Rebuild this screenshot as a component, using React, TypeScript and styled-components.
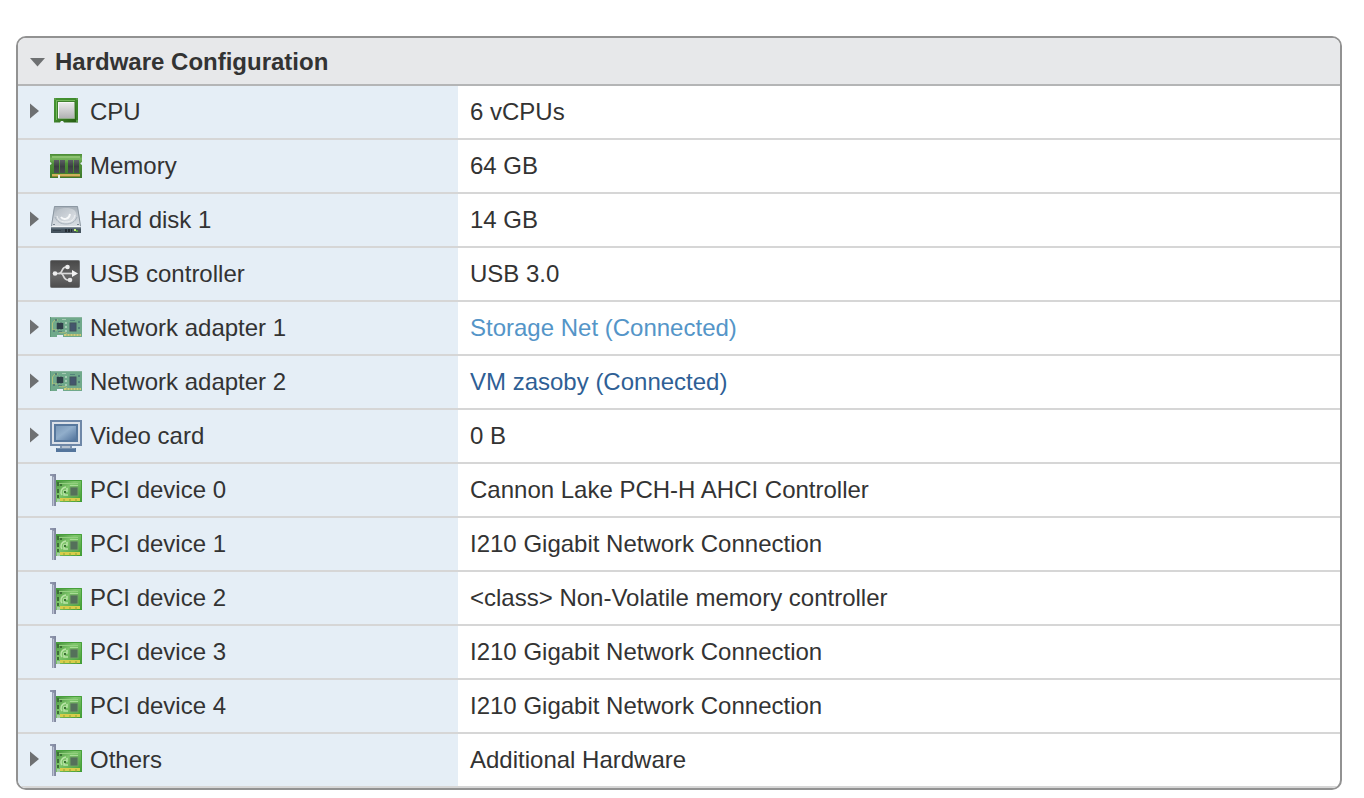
import React, { useState } from "react";
import styled, { createGlobalStyle } from "styled-components";

const GlobalStyle = createGlobalStyle`
  *, *::before, *::after { box-sizing: border-box; }
  body {
    margin: 0;
    background: #ffffff;
    color: #333333;
    font-family: "Helvetica Neue", "Liberation Sans", Arial, sans-serif;
    font-size: 24px;
    line-height: 28px;
  }
`;

const Page = styled.main`
  padding: 36px 22px 8px 16px;
`;

const Panel = styled.section`
  border: 2px solid #929292;
  border-radius: 10px;
  overflow: hidden;
  background: #ffffff;
`;

const PanelHeader = styled.h2`
  margin: 0;
  font-size: 24px;
  font-weight: 700;
  background: #e7e8ea;
  border-bottom: 2px solid #b4b5b6;
`;

const HeaderToggle = styled.button`
  display: flex;
  align-items: center;
  gap: 10px;
  width: 100%;
  height: 46px;
  padding: 2px 12px 0;
  border: 0;
  background: none;
  color: inherit;
  font: inherit;
  line-height: 28px;
  text-align: left;
  cursor: pointer;
`;

const HardwareTable = styled.table`
  width: 100%;
  table-layout: fixed;
  border-collapse: separate;
  border-spacing: 0;
`;

const NameCell = styled.th`
  width: 440px;
  height: 54px;
  padding: 0;
  border-bottom: 2px solid #d6d6d6;
  background: #e5eef6;
  font-weight: 400;
  text-align: left;
`;

const NameContent = styled.div`
  display: flex;
  align-items: center;
`;

const RowToggle = styled.button`
  display: flex;
  align-items: center;
  justify-content: flex-end;
  width: 22px;
  height: 32px;
  margin-right: 10px;
  padding: 0 1px 2px 0;
  border: 0;
  background: none;
  cursor: pointer;
`;

const ToggleSpace = styled.span`
  width: 32px;
`;

const DeviceIcon = styled.svg`
  width: 32px;
  height: 32px;
  margin-right: 8px;
  flex: none;
`;

const ValueCell = styled.td`
  height: 54px;
  padding: 0 12px;
  border-bottom: 2px solid #d6d6d6;
`;

const NetworkLink = styled.a<{ $tone: string }>`
  color: ${(p) => p.$tone};
  text-decoration: none;
`;

function CpuIcon() {
  return (
    <DeviceIcon viewBox="0 0 32 32" aria-hidden="true">
      <defs>
        <linearGradient id="cpuBoard" x1="0" y1="0" x2="1" y2="1">
          <stop offset="0" stopColor="#5cab45" />
          <stop offset="1" stopColor="#22590f" />
        </linearGradient>
        <linearGradient id="cpuCap" x1="0" y1="0" x2="0" y2="1">
          <stop offset="0" stopColor="#ededee" />
          <stop offset="1" stopColor="#b2b2b4" />
        </linearGradient>
      </defs>
      <path d="M4 2H28V26.500H14L13 25H11L10 26.500H4Z" fill="url(#cpuBoard)" />
      <path d="M5 25V3H27V25" fill="none" stroke="#3f8c2c" strokeWidth="1.500" />
      <path d="M6.500 24V4.500H25" fill="none" stroke="#73b85c" strokeWidth="1" />
      <path d="M4 2h2v2H4zM26 2h2v2h-2zM26 24h2v2h-2z" fill="#5a9a48" />
      <rect x="7" y="5" width="18" height="18" fill="#3f7f2e" />
      <rect x="8" y="6" width="16" height="16" fill="url(#cpuCap)" />
      <path d="M8.500 22V6.500H24" fill="none" stroke="#f7f7f8" strokeWidth="1" />
      <path d="M8 22.500H24.500V6" fill="none" stroke="#8fae86" strokeWidth="1" />
    </DeviceIcon>
  );
}

function MemoryIcon() {
  return (
    <DeviceIcon viewBox="0 0 32 32" aria-hidden="true">
      <defs>
        <linearGradient id="ramBoard" x1="0" y1="0" x2="0" y2="1">
          <stop offset="0" stopColor="#4a8a34" />
          <stop offset="0.2" stopColor="#78b55e" />
          <stop offset="0.4" stopColor="#4f9039" />
          <stop offset="1" stopColor="#3d792a" />
        </linearGradient>
        <linearGradient id="ramChip" x1="0" y1="0" x2="0" y2="1">
          <stop offset="0" stopColor="#5c6063" />
          <stop offset="0.5" stopColor="#3b3f42" />
          <stop offset="1" stopColor="#4b4f50" />
        </linearGradient>
      </defs>
      <path d="M0 4H32V12L30.500 13V14L32 15V28H10V26H8V28H0V15L1.500 14V13L0 12Z" fill="url(#ramBoard)" />
      <path d="M2 7H30" stroke="#8bc16f" strokeWidth="2" />
      <g fill="url(#ramChip)">
        <rect x="4" y="10" width="5" height="13" />
        <rect x="10" y="10" width="5" height="13" />
        <rect x="18" y="10" width="5" height="13" />
        <rect x="24" y="10" width="5" height="13" />
      </g>
      <path d="M2 24H30V26H2Z" fill="#d0b15a" />
      <path d="M2 26H8V27H2ZM10 26H30V27H10Z" fill="#8f8433" />
      <path d="M8 25h2v3H8z" fill="#e5eee6" />
    </DeviceIcon>
  );
}

function DiskIcon() {
  return (
    <DeviceIcon viewBox="0 0 32 32" aria-hidden="true">
      <defs>
        <linearGradient id="diskCase" x1="0" y1="0" x2="0" y2="1">
          <stop offset="0" stopColor="#a3acb5" />
          <stop offset="0.5" stopColor="#c5ccd3" />
          <stop offset="1" stopColor="#dde2e7" />
        </linearGradient>
        <linearGradient id="diskPlate" x1="0" y1="0" x2="1" y2="1">
          <stop offset="0" stopColor="#b4bcc4" />
          <stop offset="1" stopColor="#e1e5e9" />
        </linearGradient>
      </defs>
      <path d="M4.500 2H27.500L31 21V24H1V21Z" fill="url(#diskCase)" />
      <path d="M1.500 22L4.500 2.500H27.500L30.500 22" fill="none" stroke="#8c98a3" strokeWidth="1" />
      <path d="M6 12C5 6 10 4 16 4C22 4 27 6 26 12C25 17 21 19 16 19C11 19 7 17 6 12Z" fill="url(#diskPlate)" />
      <path d="M5 13C7 18 11 20 16 20C21 20 25 18 27 13" fill="none" stroke="#a7b1bb" strokeWidth="1" />
      <path d="M7 12C8 17 12 18 16 18C21 18 24 16 25 11" fill="none" stroke="#eef1f4" strokeWidth="1" />
      <path d="M11 13C13 16 19 16 20 10" fill="none" stroke="#f7f9fa" strokeWidth="2" />
      <path d="M3 20.500h2M27 20.500h2" stroke="#7b8792" strokeWidth="1" />
      <path d="M2 22.500H30" stroke="#f0f3f5" strokeWidth="1" />
      <path d="M1 23.500H31V29H1Z" fill="#46545f" />
      <path d="M1 24H31" stroke="#6e7e8b" strokeWidth="1" />
      <path d="M15 25h2v3h-2zM18 25h2v3h-2zM21 25h1v3h-1z" fill="#242d34" />
      <rect x="24" y="25" width="2" height="2" fill="#c9f57a" />
      <path d="M26 26h2v2h-2z" fill="#599c36" />
      <path d="M3 26h8v1H3z" fill="#34414b" />
    </DeviceIcon>
  );
}

function UsbIcon() {
  return (
    <DeviceIcon viewBox="0 0 32 32" aria-hidden="true">
      <defs>
        <linearGradient id="usbTile" x1="0" y1="0" x2="0" y2="1">
          <stop offset="0" stopColor="#484848" />
          <stop offset="0.6" stopColor="#666666" />
          <stop offset="1" stopColor="#4d4d4d" />
        </linearGradient>
      </defs>
      <rect x="0.500" y="2.500" width="29" height="27" rx="1" fill="url(#usbTile)" stroke="#707274" />
      <g fill="none" stroke="#dadada" strokeWidth="1.700">
        <path d="M5 15.500H25" />
        <path d="M9 15.500C13 15.500 11 9 16 9" />
        <path d="M11 15.500C14 15.500 13 22 18 22" />
      </g>
      <circle cx="5" cy="15.500" r="2.300" fill="#eeeeee" />
      <circle cx="17.500" cy="9" r="2.300" fill="#ededed" />
      <circle cx="20" cy="22" r="2.300" fill="#e8e8e8" />
      <path d="M22 12L28 15.500L22 19Z" fill="#f3f3f3" />
    </DeviceIcon>
  );
}

function NetworkIcon() {
  return (
    <DeviceIcon viewBox="0 0 32 32" aria-hidden="true">
      <path d="M0 5H32V25H13V23H7V25H0Z" fill="#70a98b" />
      <path d="M0 5.500H32" stroke="#8bb6a0" strokeWidth="1" />
      <path d="M.5 5V25" stroke="#5b9779" strokeWidth="1" />
      <path d="M8 8H5L2.500 11V18H7M9 20C13 22 15 19 17 22" fill="none" stroke="#b0c17a" strokeWidth="1" />
      <path d="M5 7h2v2H5zM3 18h2v2H3zM8 19h4v1H8z" fill="#577e77" />
      <path d="M15 10h2v2h-2zM15 14h2v2h-2zM15 18h2v2h-2zM12 7h4v1h-4z" fill="#a5cab3" />
      <rect x="7" y="11" width="6" height="6" fill="#2f3f49" />
      <path d="M6 12h1M6 14h1M6 16h1M13 12h1M13 14h1M13 16h1M8 10v1M11 10v1M8 17v1M11 17v1" stroke="#546c6b" strokeWidth="1" />
      <rect x="20" y="11" width="6" height="8" fill="#44566d" stroke="#42555f" strokeWidth="1" />
      <path d="M20 8h5v1h-5zM28 9h2v2h-2zM28 15h2v2h-2z" fill="#53837b" />
      <path d="M14 22H31V24H14Z" fill="#cdcb79" />
      <path d="M17 22v2M20 22v2M23 22v2M26 22v2M29 22v2" stroke="#8faa72" strokeWidth="1" />
    </DeviceIcon>
  );
}

function VideoIcon() {
  return (
    <DeviceIcon viewBox="0 0 32 32" aria-hidden="true">
      <defs>
        <linearGradient id="videoScreen" x1="0" y1="0" x2="1" y2="1">
          <stop offset="0" stopColor="#7896b6" />
          <stop offset="0.450" stopColor="#91aecb" />
          <stop offset="1" stopColor="#4b6d97" />
        </linearGradient>
      </defs>
      <rect x="1" y="1" width="30" height="24" fill="#dce1e8" stroke="#6e87a7" strokeWidth="2" />
      <rect x="5" y="5" width="22" height="16" fill="url(#videoScreen)" stroke="#58789d" strokeWidth="2" />
      <path d="M10 26H22V28H10Z" fill="#8297b1" />
      <path d="M12 26H20V28H12Z" fill="#b6c2d0" />
      <rect x="6" y="28" width="20" height="4" fill="#54759c" />
      <path d="M7 28.500H25" stroke="#7891ae" strokeWidth="1" />
    </DeviceIcon>
  );
}

function PciIcon() {
  return (
    <DeviceIcon viewBox="0 0 32 32" aria-hidden="true">
      <defs>
        <linearGradient id="pciBoard" x1="0" y1="0" x2="1" y2="1">
          <stop offset="0" stopColor="#3f8b36" />
          <stop offset="0.400" stopColor="#80c76d" />
          <stop offset="1" stopColor="#3d9a30" />
        </linearGradient>
        <linearGradient id="pciBracket">
          <stop offset="0" stopColor="#a9b0c3" />
          <stop offset="1" stopColor="#7d849c" />
        </linearGradient>
      </defs>
      <path d="M6 6H32V28H6Z" fill="url(#pciBoard)" />
      <path d="M6 6.500H31.500V27" fill="none" stroke="#47a03b" strokeWidth="1" />
      <path d="M9 9.500H28" stroke="#94cf80" strokeWidth="1" />
      <path d="M20 11.500H28" stroke="#a8dc95" strokeWidth="1" />
      <path d="M16 13C11 14 10 18 12 21M17 14V17H14V21H18" fill="none" stroke="#b9e3a6" strokeWidth="1.500" />
      <path d="M7 8h2v4H7zM7 15h2v4H7zM10 10h2v2h-2zM7 21h2v3H7zM14 17h2v2h-2z" fill="#3d7036" />
      <rect x="20" y="13" width="8" height="9" fill="#54705a" stroke="#70a565" strokeWidth="1" />
      <path d="M10 24H30V27H10Z" fill="#d8cd4a" />
      <path d="M14 25v3M20 25v3M26 25v3" stroke="#8da234" strokeWidth="1" />
      <path d="M7 25h3v3H7z" fill="#a7cfa3" />
      <path d="M0 0H6V32H2V2H0Z" fill="url(#pciBracket)" />
      <path d="M3.500 3V32" stroke="#bbc1d2" strokeWidth="1" />
      <path d="M0 1H6" stroke="#8087a0" strokeWidth="1" />
    </DeviceIcon>
  );
}

type Device = {
  name: string;
  value: string;
  icon: () => React.JSX.Element;
  expandable?: boolean;
  linkColor?: string;
};

const devices: Device[] = [
  { name: "CPU", value: "6 vCPUs", icon: CpuIcon, expandable: true },
  { name: "Memory", value: "64 GB", icon: MemoryIcon },
  { name: "Hard disk 1", value: "14 GB", icon: DiskIcon, expandable: true },
  { name: "USB controller", value: "USB 3.0", icon: UsbIcon },
  { name: "Network adapter 1", value: "Storage Net (Connected)", icon: NetworkIcon, expandable: true, linkColor: "#5495c8" },
  { name: "Network adapter 2", value: "VM zasoby (Connected)", icon: NetworkIcon, expandable: true, linkColor: "#2f5f95" },
  { name: "Video card", value: "0 B", icon: VideoIcon, expandable: true },
  { name: "PCI device 0", value: "Cannon Lake PCH-H AHCI Controller", icon: PciIcon },
  { name: "PCI device 1", value: "I210 Gigabit Network Connection", icon: PciIcon },
  { name: "PCI device 2", value: "<class> Non-Volatile memory controller", icon: PciIcon },
  { name: "PCI device 3", value: "I210 Gigabit Network Connection", icon: PciIcon },
  { name: "PCI device 4", value: "I210 Gigabit Network Connection", icon: PciIcon },
  { name: "Others", value: "Additional Hardware", icon: PciIcon, expandable: true },
];

function DeviceRow({ device }: { device: Device }) {
  const Icon = device.icon;
  return (
    <tr>
      <NameCell scope="row">
        <NameContent>
          {device.expandable ? (
            <RowToggle type="button" aria-label={`Expand ${device.name}`} aria-expanded={false}>
              <svg width="9" height="16" viewBox="0 0 9 16" aria-hidden="true">
                <path d="M0 0.500L9 8L0 15.500Z" fill="#6e7072" />
              </svg>
            </RowToggle>
          ) : (
            <ToggleSpace />
          )}
          <Icon />
          {device.name}
        </NameContent>
      </NameCell>
      <ValueCell>
        {device.linkColor ? (
          <NetworkLink href="#network" $tone={device.linkColor}>
            {device.value}
          </NetworkLink>
        ) : (
          device.value
        )}
      </ValueCell>
    </tr>
  );
}

export default function App() {
  const [open, setOpen] = useState(true);
  return (
    <>
      <GlobalStyle />
      <Page>
        <Panel>
          <PanelHeader>
            <HeaderToggle type="button" aria-expanded={open} onClick={() => setOpen(!open)}>
              <svg width="15" height="9" viewBox="0 0 15 9" aria-hidden="true">
                <path d="M0 0H15L7.500 8.500Z" fill="#6e7072" />
              </svg>
              Hardware Configuration
            </HeaderToggle>
          </PanelHeader>
          {open && (
            <HardwareTable aria-label="Hardware Configuration">
              <tbody>
                {devices.map((device) => (
                  <DeviceRow key={device.name} device={device} />
                ))}
              </tbody>
            </HardwareTable>
          )}
        </Panel>
      </Page>
    </>
  );
}
